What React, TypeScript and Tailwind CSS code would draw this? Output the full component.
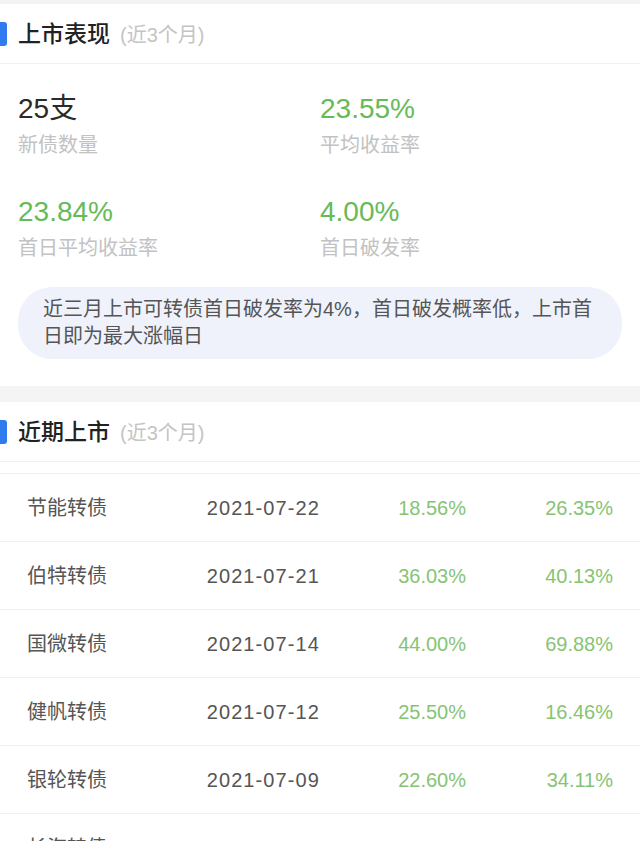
import React from 'react';

const font = { fontFamily: '"Liberation Sans", "Noto Sans CJK SC", sans-serif' };

const rows = [
  { name: '节能转债', date: '2021-07-22', a: '18.56%', b: '26.35%' },
  { name: '伯特转债', date: '2021-07-21', a: '36.03%', b: '40.13%' },
  { name: '国微转债', date: '2021-07-14', a: '44.00%', b: '69.88%' },
  { name: '健帆转债', date: '2021-07-12', a: '25.50%', b: '16.46%' },
  { name: '银轮转债', date: '2021-07-09', a: '22.60%', b: '34.11%' },
  { name: '长海转债', date: '2021-07-08', a: '12.37%', b: '24.36%' },
];

function SectionHeader({ title }: { title: string }) {
  return (
    <div className="flex items-center h-[60px] border-b border-[#f1f1f1]">
      <div className="w-[7px] h-[24px] bg-[#2f7bef] rounded-r-[3px]" />
      <span className="ml-[11px] mt-[2px] text-[23px] font-medium text-[#222] leading-none">{title}</span>
      <span className="ml-[10px] mt-[2px] text-[20px] text-[#c4c4c4] leading-none">(近3个月)</span>
    </div>
  );
}

function Stat({ value, label, green }: { value: string; label: string; green?: boolean }) {
  return (
    <div className="flex flex-col">
      <span className={`text-[28px] leading-[34px] ${green ? 'text-[#67ba58]' : 'text-[#2a2a2a]'}`}>{value}</span>
      <span className="mt-[7px] text-[20px] leading-[24px] text-[#c2c2c2]">{label}</span>
    </div>
  );
}

export default function App() {
  return (
    <div className="w-[640px] h-[841px] overflow-hidden bg-white" style={font}>
      <div className="h-[4px] bg-[#f3f3f3]" />

      {/* 上市表现 */}
      <SectionHeader title="上市表现" />
      <div className="grid grid-cols-2 px-[18px] pt-[28px] gap-y-[38px]">
        <Stat value="25支" label="新债数量" />
        <Stat value="23.55%" label="平均收益率" green />
        <Stat value="23.84%" label="首日平均收益率" green />
        <Stat value="4.00%" label="首日破发率" green />
      </div>
      <div className="mx-[18px] mt-[27px] rounded-[34px] bg-[#eff2fb] pl-[25px] pr-[14px] py-[9px] text-[20px] leading-[27px] text-[#555]">
        近三月上市可转债首日破发率为4%，首日破发概率低，上市首日即为最大涨幅日
      </div>
      <div className="h-[27px]" />
      <div className="h-[16px] bg-[#f4f4f4]" />

      {/* 近期上市 */}
      <SectionHeader title="近期上市" />
      <div className="h-[12px] border-b border-[#f1f1f1]" />
      <div className="flex flex-col">
        {rows.map((r) => (
          <div key={r.name} className="flex items-center h-[68px] shrink-0 border-b border-[#f1f1f1] text-[20px]">
            <span className="ml-[27px] w-[120px] text-[#555]">{r.name}</span>
            <span className="w-[173px] text-right text-[#555] tracking-[1.1px]">{r.date}</span>
            <span className="w-[146px] text-right text-[#86c474]">{r.a}</span>
            <span className="w-[147px] text-right text-[#86c474]">{r.b}</span>
          </div>
        ))}
      </div>
    </div>
  );
}
